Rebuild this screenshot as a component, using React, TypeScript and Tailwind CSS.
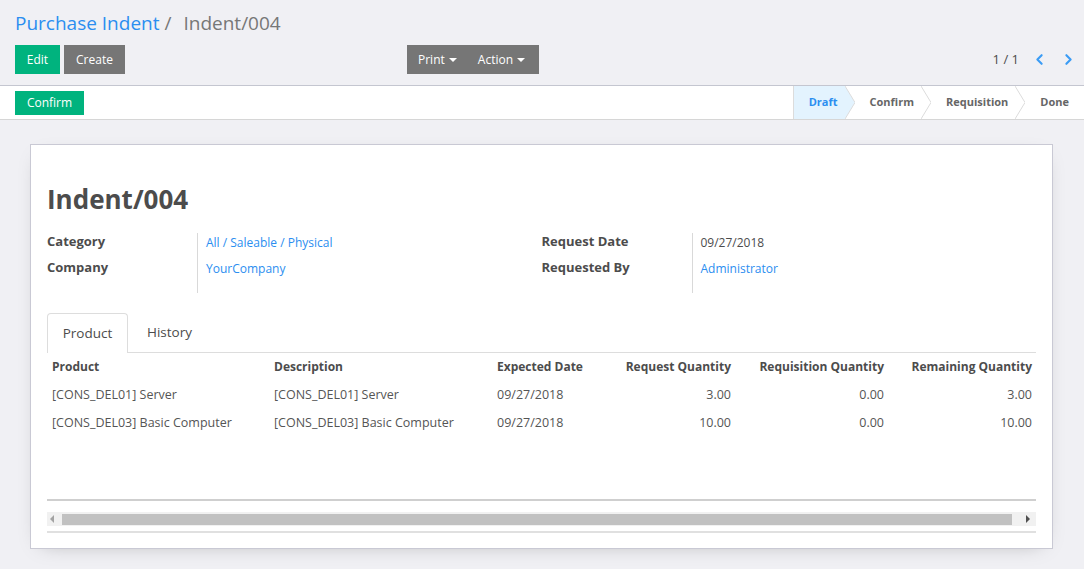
import React from 'react';
import { ChevronLeft, ChevronRight } from 'lucide-react';

const ROWS = [
  { product: '[CONS_DEL01] Server', desc: '[CONS_DEL01] Server', date: '09/27/2018', req: '3.00', rqn: '0.00', rem: '3.00' },
  { product: '[CONS_DEL03] Basic Computer', desc: '[CONS_DEL03] Basic Computer', date: '09/27/2018', req: '10.00', rqn: '0.00', rem: '10.00' },
];

const STAGES = ['Draft', 'Confirm', 'Requisition', 'Done'];

function Caret() {
  return <span className="inline-block ml-[4px] w-0 h-0 border-l-[4px] border-r-[4px] border-t-[4px] border-l-transparent border-r-transparent border-t-white align-middle" />;
}

function Chevron({ active }: { active: boolean }) {
  return (
    <svg width="10" height="33" viewBox="0 0 10 33" className="shrink-0 block">
      {active && <polygon points="0,0 10,16.5 0,33" fill="#e3f3fe" />}
      <polyline points="0,0 10,16.5 0,33" fill="none" stroke="#dcdcdc" strokeWidth="1" />
    </svg>
  );
}

export default function App() {
  return (
    <div className="bg-[#f0f0f4] min-h-[569px] font-['Open_Sans',sans-serif] text-[#4c4c4c]">

      {/* Control panel */}
      <div className="px-[15px] pt-[10px] pb-[11px] border-b border-[#c4c6d0]">
        <div className="h-[26px] flex items-center text-[19px] leading-none">
          <span className="text-[#2b8ef0]">Purchase Indent</span>
          <span className="text-[#777] ml-[5px]">/</span>
          <span className="text-[#777] ml-[12px]">Indent/004</span>
        </div>
        <div className="mt-[9px] flex items-center h-[29px]">
          <button className="h-[29px] w-[45px] bg-[#00b37e] text-white text-[12px]">Edit</button>
          <button className="h-[29px] w-[61px] ml-[4px] bg-[#767676] text-white text-[12px]">Create</button>
          <div className="ml-[282px] flex h-[29px] w-[132px] bg-[#767676] text-white text-[12px]">
            <button className="pl-[11px] pr-[10px] flex items-center">Print<Caret /></button>
            <button className="pl-[11px] pr-[10px] flex items-center">Action<Caret /></button>
          </div>
          <div className="ml-auto -mr-[8px] flex items-center text-[13px] text-[#4c4c4c]">
            <span>1 / 1</span>
            <ChevronLeft className="w-[17px] h-[17px] ml-[12px] text-[#3b9cf5]" strokeWidth={3} />
            <ChevronRight className="w-[17px] h-[17px] ml-[12px] text-[#3b9cf5]" strokeWidth={3} />
          </div>
        </div>
      </div>

      {/* Status bar */}
      <div className="bg-white h-[34px] border-b border-[#d6d6d6] flex items-center justify-between pl-[15px]">
        <button className="h-[24px] w-[69px] bg-[#00b37e] text-white text-[12px]">Confirm</button>
        <div className="flex h-[33px] self-start border-l border-[#dcdcdc]">
          {STAGES.map((s, i) => (
            <div key={s} className="flex h-[33px]">
              <div className={`flex items-center pl-[15px] pr-[7px] text-[11px] font-bold ${i === 0 ? 'bg-[#e3f3fe] text-[#2b8ef0]' : 'text-[#666]'}`}>
                {s}
              </div>
              {i < STAGES.length - 1 && <Chevron active={i === 0} />}
              {i === STAGES.length - 1 && <div className="w-[8px]" />}
            </div>
          ))}
        </div>
      </div>

      {/* Sheet */}
      <div className="pt-[24px] pl-[30px] pr-[31px]">
        <div className="bg-white border border-[#c9c9d4] shadow-[0_5px_20px_-12px_rgba(0,0,0,0.35)] h-[405px] px-[16px] pt-[38px]">
          <h1 className="text-[26px] leading-[32px] font-bold text-[#4c4c4c]">Indent/004</h1>

          <div className="mt-[18px] flex">
            <div className="w-1/2 flex">
              <div className="w-[150px] flex flex-col gap-[8px] text-[13px] font-bold">
                <div className="h-[18px] leading-[16px]">Category</div>
                <div className="h-[18px] leading-[16px]">Company</div>
              </div>
              <div className="h-[60px] border-l border-[#d9d9d9] pl-[8px] flex flex-col gap-[8px] text-[12px] text-[#2b8ef0]">
                <div className="h-[18px] leading-[20px]">All / Saleable / Physical</div>
                <div className="h-[18px] leading-[20px]">YourCompany</div>
              </div>
            </div>
            <div className="w-1/2 flex">
              <div className="w-[150px] flex flex-col gap-[8px] text-[13px] font-bold">
                <div className="h-[18px] leading-[16px]">Request Date</div>
                <div className="h-[18px] leading-[16px]">Requested By</div>
              </div>
              <div className="h-[60px] border-l border-[#d9d9d9] pl-[8px] flex flex-col gap-[8px] text-[12px]">
                <div className="h-[18px] leading-[20px] text-[#4c4c4c]">09/27/2018</div>
                <div className="h-[18px] leading-[20px] text-[#2b8ef0]">Administrator</div>
              </div>
            </div>
          </div>

          {/* Tabs */}
          <div className="mt-[20px] flex h-[40px] border-b border-[#dddddd] text-[13.5px]">
            <div className="h-[40px] w-[81px] flex items-center justify-center bg-white border border-b-0 border-[#dddddd] rounded-t-[4px] text-[#4c4c4c]">Product</div>
            <div className="h-[39px] pl-[19px] flex items-center text-[#4c4c4c]">History</div>
          </div>

          {/* Table */}
          <table className="w-full table-fixed border-collapse text-[12.5px]">
            <colgroup>
              <col className="w-[222px]" />
              <col className="w-[223px]" />
              <col className="w-[110px]" />
              <col className="w-[134px]" />
              <col className="w-[153px]" />
              <col className="w-[148px]" />
            </colgroup>
            <thead>
              <tr className="h-[28px] text-[12px] font-bold">
                <th className="px-[5px] pb-[1px] text-left">Product</th>
                <th className="px-[5px] pb-[1px] text-left">Description</th>
                <th className="px-[5px] pb-[1px] text-left whitespace-nowrap">Expected Date</th>
                <th className="px-[5px] pb-[1px] text-right whitespace-nowrap">Request Quantity</th>
                <th className="px-[5px] pb-[1px] text-right whitespace-nowrap">Requisition Quantity</th>
                <th className="px-[5px] pb-[1px] text-right whitespace-nowrap">Remaining Quantity</th>
              </tr>
            </thead>
            <tbody className="text-[#555]">
              {ROWS.map((r) => (
                <tr key={r.product} className="h-[28px]">
                  <td className="px-[5px] whitespace-nowrap">{r.product}</td>
                  <td className="px-[5px] whitespace-nowrap">{r.desc}</td>
                  <td className="px-[5px]">{r.date}</td>
                  <td className="px-[5px] text-right">{r.req}</td>
                  <td className="px-[5px] text-right">{r.rqn}</td>
                  <td className="px-[5px] text-right">{r.rem}</td>
                </tr>
              ))}
            </tbody>
          </table>
          <div className="h-[64px] border-b-2 border-[#cfcfcf]" />

          {/* Scrollbar */}
          <div className="mt-[11px] h-[14px] bg-[#f1f1f1] flex items-center">
            <span className="ml-[3px] w-0 h-0 border-t-[4px] border-b-[4px] border-r-[4px] border-t-transparent border-b-transparent border-r-[#a3a3a3]" />
            <div className="ml-[8px] h-[11px] bg-[#c1c1c1] flex-1" />
            <span className="ml-[14px] mr-[6px] w-0 h-0 border-t-[4px] border-b-[4px] border-l-[4px] border-t-transparent border-b-transparent border-l-[#505050]" />
          </div>
          <div className="mt-[5px] border-b-2 border-[#e0e0e0]" />
        </div>
      </div>
    </div>
  );
}
